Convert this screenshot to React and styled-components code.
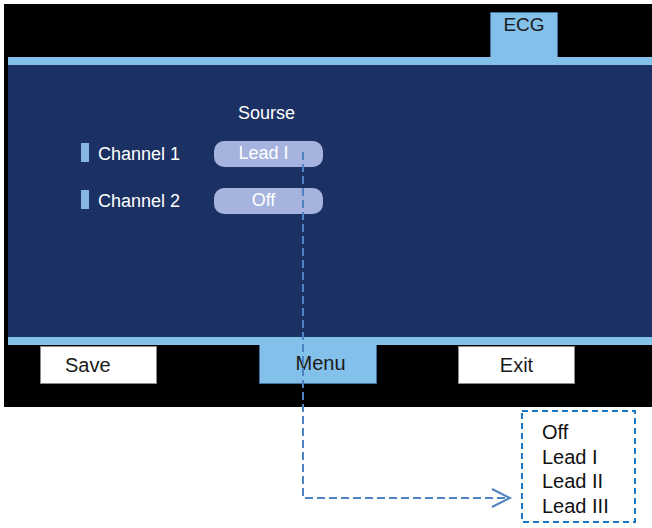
import React from "react";
import styled, { createGlobalStyle } from "styled-components";

const navy = "#1b3163";
const sky = "#83c0ea";
const edge = "#44709c";

const Global = createGlobalStyle`
  html, body { margin: 0; padding: 0; background: #fff; }
  body { font-family: "Liberation Sans", Arial, sans-serif; }
`;

const Page = styled.div`
  position: relative;
  width: 652px;
  height: 528px;
  padding: 4px 0 0 4px;
  box-sizing: border-box;
`;

const Screen = styled.div`
  width: 648px;
  height: 403px;
  background: #000;
  padding-left: 4px;
  box-sizing: border-box;
  display: flex;
  flex-direction: column;
`;

const TopArea = styled.div`
  height: 53px;
  display: flex;
  align-items: flex-end;
`;

const TopTab = styled.div`
  margin-left: 482px;
  width: 68px;
  height: 45px;
  box-sizing: border-box;
  background: ${sky};
  border: 1px solid ${edge};
  border-bottom: none;
  color: #1a1a1a;
  font-size: 19px;
  line-height: 22px;
  padding-top: 1px;
  text-align: center;
`;

const Bar = styled.div`
  height: 8px;
  background: ${sky};
`;

const Panel = styled.div`
  height: 272px;
  background: ${navy};
  padding: 38px 0 0 73px;
  box-sizing: border-box;
  color: #fff;
`;

const Title = styled.div`
  width: 105px;
  margin-left: 133px;
  text-align: center;
  font-size: 18px;
  line-height: 21px;
  margin-bottom: 17px;
`;

const Row = styled.div`
  display: flex;
  align-items: center;
  height: 26px;
  margin-bottom: 21px;
`;

const Marker = styled.span`
  width: 8px;
  height: 19px;
  background: #86b7e4;
  margin-right: 9px;
  margin-top: -3px;
`;

const Label = styled.span`
  width: 116px;
  font-size: 18px;
  line-height: 21px;
`;

const Pill = styled.span`
  width: 109px;
  height: 26px;
  border-radius: 10px;
  background: #a6b3df;
  font-size: 18px;
  line-height: 25px;
  text-align: center;
  padding-right: 10px;
  box-sizing: border-box;
`;

const Buttons = styled.div`
  display: flex;
  align-items: flex-start;
  height: 62px;
`;

const Key = styled.div`
  margin-left: ${(p) => p.$left}px;
  margin-top: ${(p) => (p.$tab ? 0 : 1)}px;
  width: ${(p) => p.$width}px;
  height: ${(p) => (p.$tab ? 39 : 38)}px;
  box-sizing: border-box;
  background: ${(p) => (p.$tab ? sky : "#fff")};
  border: 1px solid ${(p) => (p.$tab ? edge : "#8a8a8a")};
  ${(p) => p.$tab && "border-top: none; padding-left: 5px !important;"}
  color: #1a1a1a;
  font-size: 20px;
  line-height: ${(p) => (p.$tab ? 37 : 36)}px;
  text-align: ${(p) => (p.$start ? "left" : "center")};
  padding-left: ${(p) => (p.$start ? 24 : 0)}px;
`;

const Overlay = styled.svg`
  position: absolute;
  left: 0;
  top: 0;
  pointer-events: none;
`;

const Options = styled.div`
  position: absolute;
  left: 542px;
  top: 420px;
  color: #111;
  font-size: 20px;
  line-height: 24.5px;
`;

export default function App() {
  return (
    <Page>
      <Global />
      <Screen>
        <TopArea>
          <TopTab>ECG</TopTab>
        </TopArea>
        <Bar />
        <Panel>
          <Title>Sourse</Title>
          <Row>
            <Marker />
            <Label>Channel 1</Label>
            <Pill>Lead I</Pill>
          </Row>
          <Row>
            <Marker />
            <Label>Channel 2</Label>
            <Pill>Off</Pill>
          </Row>
        </Panel>
        <Bar />
        <Buttons>
          <Key $left={32} $width={117} $start>Save</Key>
          <Key $left={102} $width={118} $tab>Menu</Key>
          <Key $left={81} $width={117}>Exit</Key>
        </Buttons>
      </Screen>

      <Overlay width="652" height="528">
        <path
          d="M303 152 V498 H508"
          fill="none"
          stroke="#4f82c2"
          strokeWidth="2"
          strokeDasharray="8 4"
        />
        <path d="M492 489 L510 498 L492 507" fill="none" stroke="#4f82c2" strokeWidth="2" />
        <rect
          x="522"
          y="411"
          width="113"
          height="111"
          fill="none"
          stroke="#1a78c9"
          strokeWidth="2"
          strokeDasharray="6 4"
        />
      </Overlay>
      <Options>
        <div>Off</div>
        <div>Lead I</div>
        <div>Lead II</div>
        <div>Lead III</div>
      </Options>
    </Page>
  );
}
